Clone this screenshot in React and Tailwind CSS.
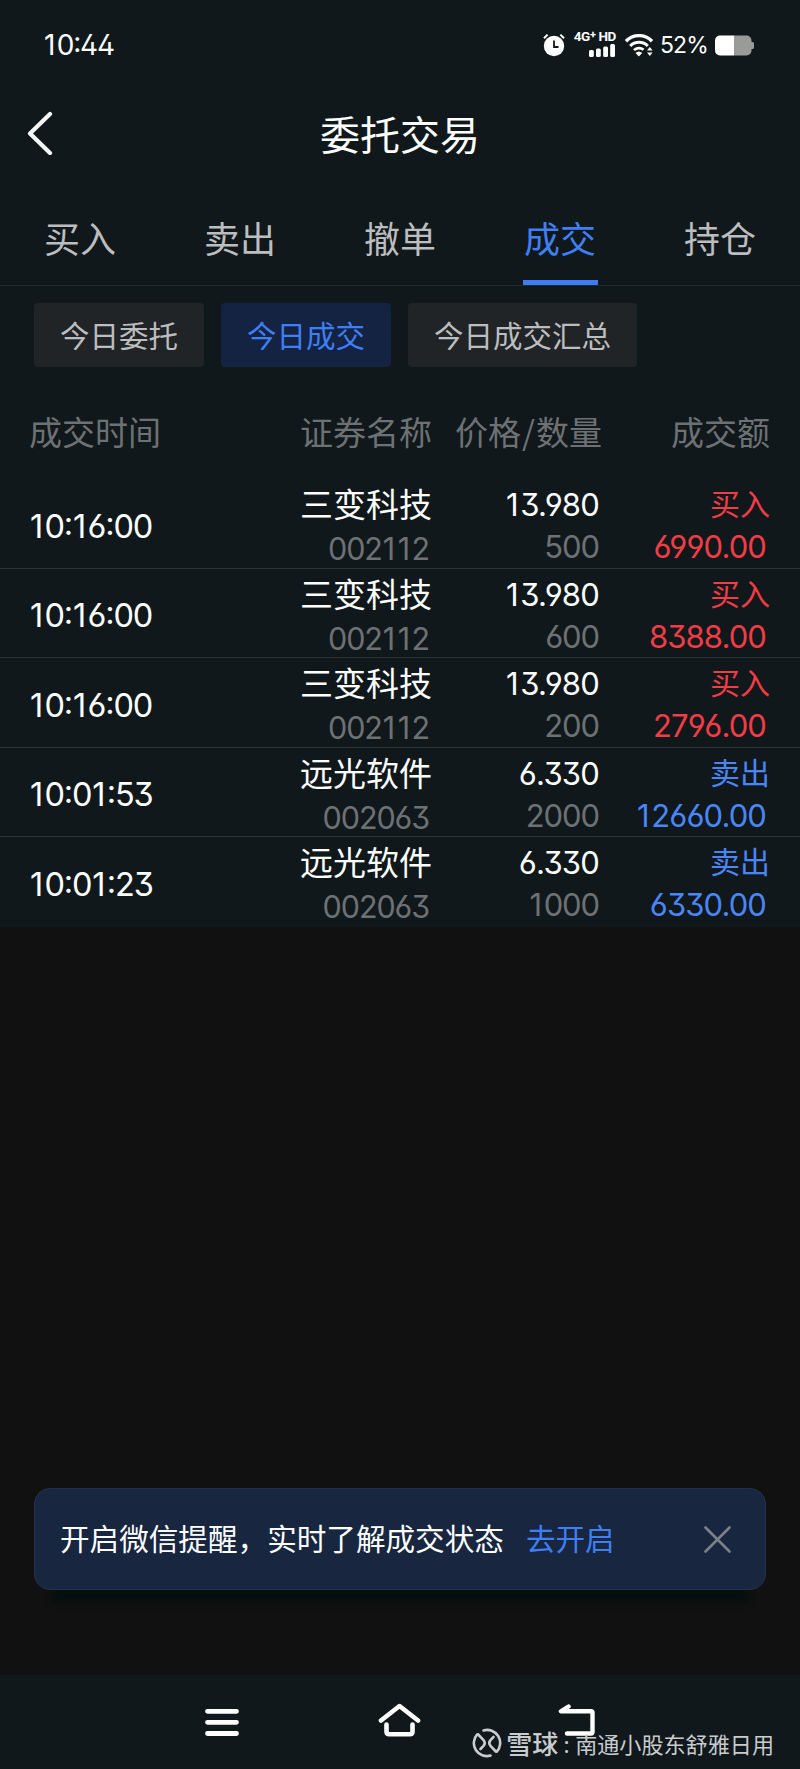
import clsx from 'clsx'

const TABS = ['买入', '卖出', '撤单', '成交', '持仓']
const FILTERS = ['今日委托', '今日成交', '今日成交汇总']

const TRADES = [
  { id: 1, time: '10:16:00', name: '三变科技', code: '002112', price: '13.980', qty: '500', side: '买入', amount: '6990.00' },
  { id: 2, time: '10:16:00', name: '三变科技', code: '002112', price: '13.980', qty: '600', side: '买入', amount: '8388.00' },
  { id: 3, time: '10:16:00', name: '三变科技', code: '002112', price: '13.980', qty: '200', side: '买入', amount: '2796.00' },
  { id: 4, time: '10:01:53', name: '远光软件', code: '002063', price: '6.330', qty: '2000', side: '卖出', amount: '12660.00' },
  { id: 5, time: '10:01:23', name: '远光软件', code: '002063', price: '6.330', qty: '1000', side: '卖出', amount: '6330.00' },
]

// Inter with open digits; its "1" is narrow, so it gets a little room of its own
function Num({ value, className }) {
  return (
    <span className={clsx("font-['Inter',sans-serif] leading-none whitespace-nowrap [font-feature-settings:'ss01','calt']", className)}>
      {value.split(/(1)/).map((part, i) =>
        part === '1' ? (
          <span key={i} className="pr-[2.5px] pl-[1px]">
            1
          </span>
        ) : (
          part
        ),
      )}
    </span>
  )
}

function StatusBar() {
  return (
    <div className="flex h-[90px] items-center justify-between pr-[46px] pl-[43px] text-white">
      <Num value="10:44" className="text-[28px] tracking-[-1.2px]" />
      <div className="flex h-[26px] items-center">
        <svg width="22" height="24" viewBox="0 0 22 24" fill="none">
          <circle cx="11" cy="13" r="10.2" fill="#fff" />
          <path d="M1 5.2 4.6 1.6M21 5.2 17.4 1.6" stroke="#fff" strokeWidth="2" />
          <path d="M11 7.5V14h4.5" stroke="#10181b" strokeWidth="1.8" />
        </svg>
        <div className="mb-[3px] ml-[8px] flex w-[43px] flex-col items-end">
          <span className="font-['Roboto',sans-serif] text-[13.5px] leading-[12px] font-bold tracking-[-0.4px] whitespace-nowrap">
            4G<span className="relative -top-[3px] text-[11px]">+</span> HD
          </span>
          <svg width="27" height="13" viewBox="0 0 27 13" fill="#fff">
            <rect x="0" y="6" width="4.8" height="7" rx="1.5" />
            <rect x="7" y="4.5" width="4.8" height="8.5" rx="1.5" />
            <rect x="14.2" y="2.5" width="4.8" height="10.5" rx="1.5" />
            <rect x="21.2" y="0" width="4.8" height="13" rx="1.5" />
          </svg>
        </div>
        <svg className="ml-[9px]" width="28" height="23" viewBox="0 0 28 23" fill="none">
          <path d="M1 7.2a18 18 0 0 1 26 0" stroke="#fff" strokeWidth="3.4" />
          <path d="M5.2 12a12.4 12.4 0 0 1 17.6 0" stroke="#fff" strokeWidth="3" />
          <path d="M9 16.2a7 7 0 0 1 9.5-.4" stroke="#fff" strokeWidth="2.6" />
          <path d="m10.5 19 3.3 3.6 3.4-3.6a5 5 0 0 0-6.7 0Z" fill="#fff" />
          <path d="m22 16.5 2.8-3.5 2.8 3.5zM22 18.5l2.8 3.5 2.8-3.5z" fill="#fff" />
        </svg>
        <Num value="52%" className="ml-[7px] w-[48px] text-[23px] tracking-[-0.9px]" />
        <svg className="ml-[6px]" width="40" height="21" viewBox="0 0 40 21">
          <path d="M20 .5H6a5 5 0 0 0-5 5v10a5 5 0 0 0 5 5h14z" fill="#fff" />
          <path d="M20 .5h12.5a5 5 0 0 1 5 5V7h1q1.5 0 1.5 1.5v4q0 1.5-1.5 1.5h-1v1.5a5 5 0 0 1-5 5H20z" fill="#9a9a98" />
        </svg>
      </div>
    </div>
  )
}

function TitleBar() {
  return (
    <div className="grid h-[86px] grid-cols-[1fr_auto_1fr] items-center text-white">
      <svg className="ml-[26px]" width="28" height="44" viewBox="0 0 28 44" fill="none" stroke="#f4f6f8" strokeWidth="4.2" strokeLinecap="round" strokeLinejoin="round">
        <path d="M24 3 4 22.5 24 42" />
      </svg>
      <h1 className="text-[40px] leading-none">委托交易</h1>
    </div>
  )
}

function Tabs({ active }) {
  return (
    <div className="grid h-[110px] grid-cols-5 border-b border-[#222a2d]">
      {TABS.map((tab) => (
        <div
          key={tab}
          className={clsx(
            'relative flex justify-center pt-[43px] text-[36px] leading-none',
            tab === active ? 'text-[#3f7ff5]' : 'text-[#bcbdbf]',
          )}
        >
          {tab}
          {tab === active && <span className="absolute bottom-0 h-[5px] w-[75px] bg-[#3d7cf4]" />}
        </div>
      ))}
    </div>
  )
}

function Filters({ active }) {
  return (
    <div className="flex gap-[17px] px-[34px] pt-[17px]">
      {FILTERS.map((item) => (
        <div
          key={item}
          className={clsx(
            'flex h-[64px] items-center rounded-[4px] px-[26px] text-[29.5px] leading-none',
            item === active ? 'bg-[#152342] text-[#3f7ff5]' : 'bg-[#202427] text-[#bcbdbf]',
          )}
        >
          {item}
        </div>
      ))}
    </div>
  )
}

const COLUMNS = 'grid grid-cols-[230px_173px_170px_168px] pl-[29px]'

function TradeRow({ trade }) {
  const tone = trade.side === '买入' ? 'text-[#f23c46]' : 'text-[#4a86f7]'
  return (
    <div className={clsx(COLUMNS, 'h-[89.6px] border-b border-[#2b3336] leading-none text-white last:border-b-0')}>
      <div className="flex items-center pt-[7px]">
        <Num value={trade.time} className="text-[32.5px] tracking-[-1.2px]" />
      </div>
      <div className="flex flex-col items-end pt-[8px]">
        <span className="text-[33px]">{trade.name}</span>
        <Num value={trade.code} className="mt-[14px] pr-[3px] text-[30.5px] tracking-[-1.1px] text-[#6e7173]" />
      </div>
      <div className="flex flex-col items-end pt-[10px] pr-[3px]">
        <Num value={trade.price} className="text-[31px] tracking-[-0.8px]" />
        <Num value={trade.qty} className="mt-[11px] text-[31px] tracking-[-1.1px] text-[#6e7173]" />
      </div>
      <div className={clsx('flex flex-col items-end pt-[8px]', tone)}>
        <span className="text-[30px]">{trade.side}</span>
        <Num value={trade.amount} className="mt-[14px] pr-[4px] text-[31px] tracking-[-0.9px]" />
      </div>
    </div>
  )
}

function TradeTable() {
  return (
    <div>
      <div className={clsx(COLUMNS, 'h-[112px] pt-[48px] text-[33px] leading-none text-[#6e7173]')}>
        <span>成交时间</span>
        <span className="text-right">证券名称</span>
        <span className="text-right">
          价格<span className="px-[1px]">/</span>数量
        </span>
        <span className="text-right">成交额</span>
      </div>
      {TRADES.map((trade) => (
        <TradeRow key={trade.id} trade={trade} />
      ))}
    </div>
  )
}

function Reminder() {
  return (
    <div className="mx-[34px] mb-[85px] flex h-[102px] items-center rounded-[16px] border border-[#1d3450] bg-[#18263f] pr-[34px] pb-[2px] pl-[25px] text-[29.6px] leading-none text-white shadow-[0_30px_6px_-18px_#05100e]">
      <span>开启微信提醒，实时了解成交状态</span>
      <span className="ml-[22px] text-[#3f7ff5]">去开启</span>
      <svg className="mt-[2px] ml-auto" width="27" height="27" viewBox="0 0 27 27" stroke="#7c8087" strokeWidth="2.6" strokeLinecap="round">
        <path d="M1.5 1.5l24 24M25.5 1.5l-24 24" />
      </svg>
    </div>
  )
}

function Watermark() {
  return (
    <div className="absolute right-[26px] bottom-[11px] flex items-center text-[22.1px] leading-none text-[#c9cccd]">
      <svg width="30" height="30" viewBox="0 0 30 30" fill="none" stroke="#c9cccd" strokeWidth="2.6" strokeLinecap="round">
        <path d="M11.5 2.4A13 13 0 0 1 24.8 23.6" />
        <path d="M18.5 27.6A13 13 0 0 1 5.2 6.4" />
        <path d="M6.2 6.5 11.5 12q2.5 3 0 5.8L8.5 21" />
        <path d="M23.8 23.5 18.5 18q-2.5-3 0-5.8L21.5 9" />
      </svg>
      <span className="ml-[4px] text-[26px] font-medium">雪球</span>
      <span className="w-[17px] text-center">:</span>
      <span>南通小股东舒雅日用</span>
    </div>
  )
}

function NavBar() {
  return (
    <div className="relative h-[94px] bg-[#10181b]">
      <div className="flex items-start pt-[27px] pl-[205px]">
        <svg className="mt-[6px]" width="34" height="29" viewBox="0 0 34 29" stroke="#fff" strokeWidth="4.8" strokeLinecap="round">
          <path d="M2.5 3.3h29M2.5 14.3h29M2.5 25.5h29" />
        </svg>
        <svg className="ml-[139px]" width="43" height="36" viewBox="0 0 43 36" fill="none" stroke="#fff" strokeWidth="4.6" strokeLinecap="round" strokeLinejoin="round">
          <path d="M3 18.5 21.5 4 40 18.5" />
          <path d="M8.5 22.5V29.5q0 2.8 2.8 2.8h20.4q2.8 0 2.8-2.8v-7" />
        </svg>
        <svg className="ml-[137px]" width="38" height="36" viewBox="0 0 38 36" fill="none" stroke="#fff" strokeWidth="4.4" strokeLinecap="round" strokeLinejoin="round">
          <path d="M10.5 4.5 3 9.3H33q1.5 0 1.5 1.5V30q0 1.5-1.5 1.5H9" />
        </svg>
      </div>
      <Watermark />
    </div>
  )
}

export default function App() {
  return (
    <div className="flex h-[1769px] w-[800px] flex-col overflow-hidden bg-[#111111] font-['Noto_Sans_CJK_SC',sans-serif]">
      <div className="bg-[#10181b]">
        <StatusBar />
        <TitleBar />
        <Tabs active="成交" />
        <Filters active="今日成交" />
        <TradeTable />
      </div>
      <div className="flex-1" />
      <Reminder />
      <NavBar />
    </div>
  )
}
